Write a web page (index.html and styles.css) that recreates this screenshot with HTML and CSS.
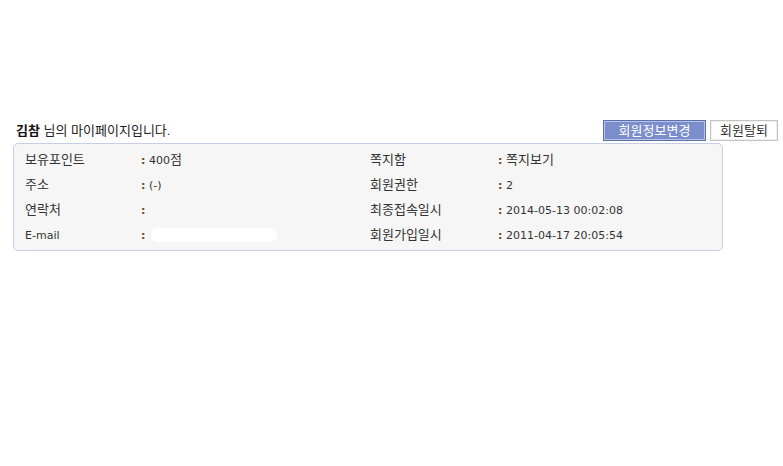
FILE: index.html
```html
<!DOCTYPE html>
<html lang="ko">

<head>
    <meta charset="UTF-8">
    <title>마이페이지</title>
    <link rel="stylesheet" href="styles.css">
</head>

<body>
<div class="mypage">
    <div class="head">
        <p class="greet"><b>김참</b> 님의 마이페이지입니다<span class="en">.</span></p>
        <div class="btns">
            <a class="btn btn-blue">회원정보변경</a>
            <a class="btn btn-gray">회원탈퇴</a>
        </div>
    </div>
    <div class="box">
        <div class="row">
            <span class="lbl">보유포인트</span>
            <span class="val"><i>:</i> <span class="en">400</span>점</span>
            <span class="lbl">쪽지함</span>
            <span class="val"><i>:</i> 쪽지보기</span>
        </div>
        <div class="row">
            <span class="lbl">주소</span>
            <span class="val"><i>:</i> <span class="en">(-)</span></span>
            <span class="lbl">회원권한</span>
            <span class="val"><i>:</i> <span class="en">2</span></span>
        </div>
        <div class="row">
            <span class="lbl">연락처</span>
            <span class="val"><i>:</i></span>
            <span class="lbl">최종접속일시</span>
            <span class="val"><i>:</i> <span class="en">2014-05-13 00:02:08</span></span>
        </div>
        <div class="row">
            <span class="lbl"><span class="en">E-mail</span></span>
            <span class="val"><i>:</i> <span class="blur"></span></span>
            <span class="lbl">회원가입일시</span>
            <span class="val"><i>:</i> <span class="en">2011-04-17 20:05:54</span></span>
        </div>
    </div>
</div>
</body>

</html>
```

FILE: styles.css
```css
* {
    margin: 0;
    padding: 0;
}

html {
    background: #ffffff;
}

body {
    font-family: "Noto Sans CJK KR", "DejaVu Sans", sans-serif;
    font-size: 13px;
    color: #333333;
}

.en {
    font-family: "DejaVu Sans", "Noto Sans CJK KR", sans-serif;
    font-size: 11px;
}

.mypage {
    padding: 119px 5px 0 13px;
}

.head {
    display: flex;
    justify-content: space-between;
    align-items: center;
    height: 22px;
}

.greet {
    padding-left: 3px;
    margin-top: -1px;
    color: #222222;
}

.greet b {
    color: #111111;
}

.btns {
    display: flex;
    gap: 4px;
}

.btn {
    display: block;
    height: 21px;
    line-height: 18px;
    box-sizing: border-box;
    text-align: center;
    cursor: pointer;
}

.btn-blue {
    width: 103px;
    background: #7b8ecb;
    color: #ffffff;
    border: 1px solid #5c70ae;
    box-shadow: inset 0 0 0 1px #b9c4e6;
}

.btn-gray {
    width: 68px;
    background: #ffffff;
    color: #333333;
    border: 1px solid #c4c4c4;
    box-shadow: inset 0 0 0 1px #f0f0f0;
}

.box {
    width: 710px;
    box-sizing: border-box;
    margin-top: 2px;
    padding: 2px 0 4px 11px;
    background: #f6f6f6;
    border: 1px solid #c6cee9;
    border-radius: 5px;
}

.row {
    display: grid;
    grid-template-columns: 116px 229px 128px auto;
    align-items: center;
    height: 25px;
}

.val i {
    font-style: normal;
    font-weight: bold;
    font-family: "DejaVu Sans", sans-serif;
    font-size: 11px;
    color: #6b4a22;
}

.blur {
    display: inline-block;
    width: 126px;
    height: 14px;
    vertical-align: middle;
    margin-left: 2px;
    background: #ffffff;
    border-radius: 7px;
}
```
